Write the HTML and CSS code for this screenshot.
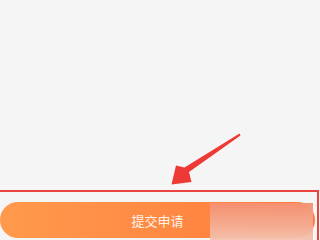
FILE: index.html
```html
<!DOCTYPE html>
<html lang="zh-CN">
<head>
<meta charset="utf-8">
<link rel="stylesheet" href="styles.css">
</head>
<body>
<div class="page">
  <div class="content"></div>
  <div class="footer">
    <button class="submit">提交申请</button>
    <div class="patch"></div>
  </div>
  <svg class="arrow" width="320" height="240" viewBox="0 0 320 240">
    <polygon fill="#ee3a36" points="239.5,133.5 240.5,135.5 189,172 191.5,182 171.5,184.5 176,165.5 184.5,167.5"/>
  </svg>
</div>
</body>
</html>
```
FILE: styles.css
```css
html, body {
  margin: 0;
  padding: 0;
}
body {
  background: #f5f5f5;
  font-family: "Noto Sans CJK SC", "Noto Sans", sans-serif;
}
.page {
  position: relative;
  width: 320px;
  height: 240px;
  overflow: hidden;
  display: flex;
  flex-direction: column;
}
.content {
  flex: 1;
}
.footer {
  position: relative;
  flex: none;
  margin-left: -2px;
  width: 321px;
  height: 50px;
  border: 2px solid #ea4440;
  border-bottom: none;
  padding-top: 10px;
  box-sizing: border-box;
}
.submit {
  display: block;
  margin: 0;
  width: 315px;
  height: 36px;
  border: none;
  border-radius: 18px;
  background: linear-gradient(90deg, #ff9a4c 0%, #ff8a44 50%, #fe7a3a 100%);
  color: #fff3ea;
  font-family: "Noto Sans CJK SC", "Noto Sans", sans-serif;
  font-size: 13px;
  padding: 0;
  cursor: pointer;
}
.patch {
  position: absolute;
  left: 210px;
  top: 11px;
  width: 103px;
  height: 40px;
  background: linear-gradient(180deg, #f59072 0%, #f4ad93 55%, #f4c7b6 100%);
  opacity: 0.95;
}
.arrow {
  position: absolute;
  left: 0;
  top: 0;
  pointer-events: none;
}
```
